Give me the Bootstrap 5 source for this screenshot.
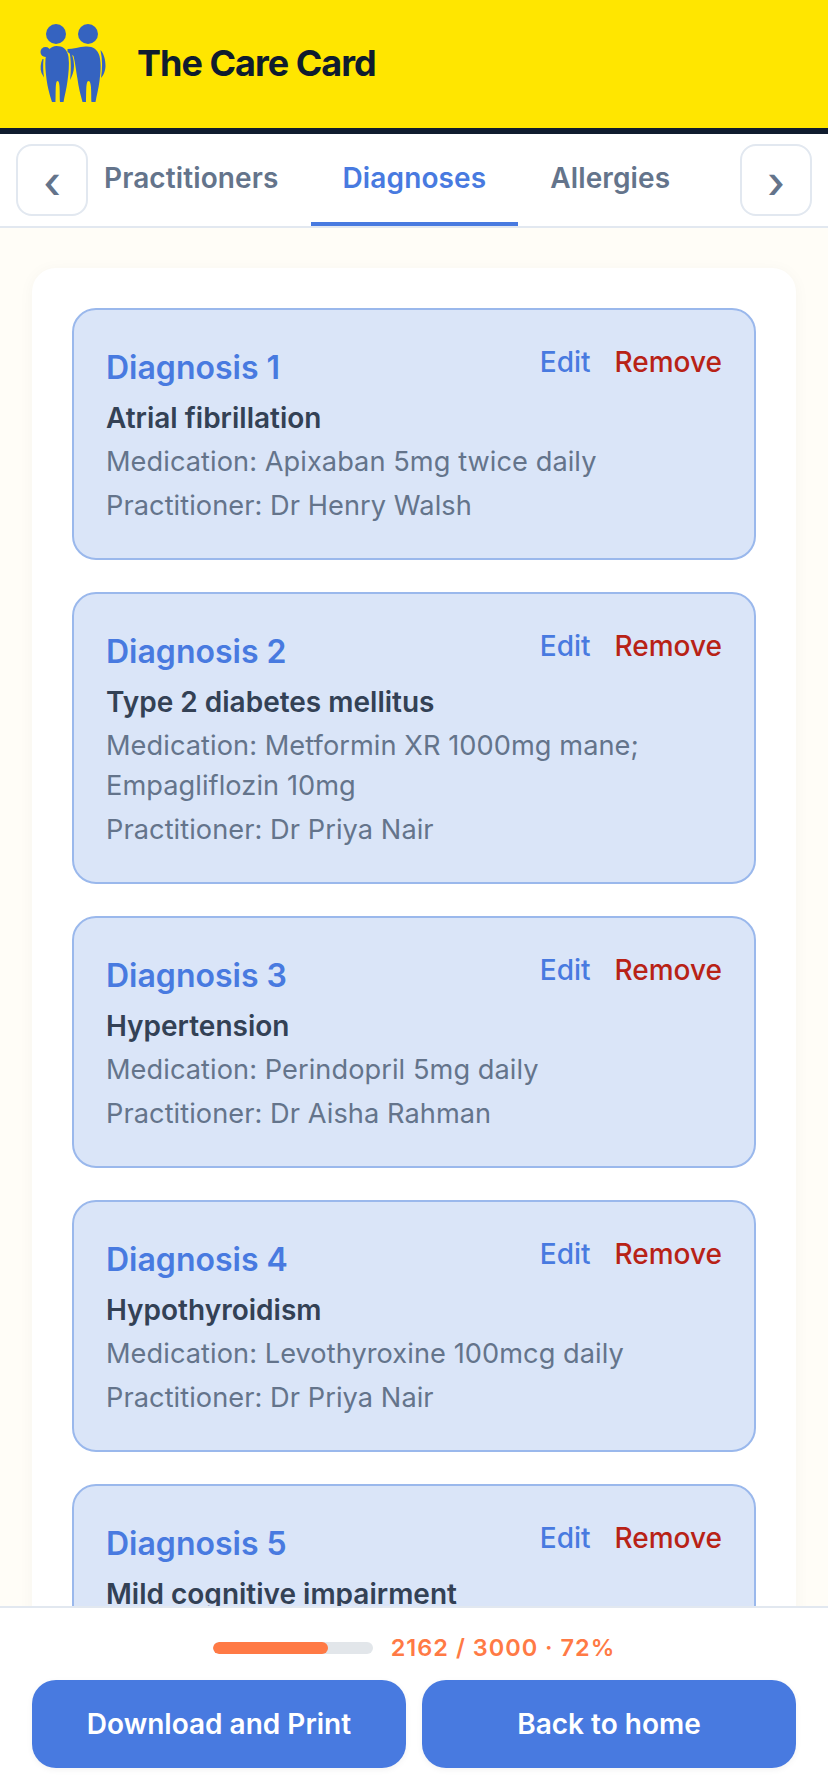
<!DOCTYPE html>
<html lang="en">
<head>
<meta charset="utf-8">
<title>The Care Card</title>
<link href="https://cdn.jsdelivr.net/npm/bootstrap@5.3.0/dist/css/bootstrap.min.css" rel="stylesheet">
<style>
html,body{height:100%;}
body{font-family:"Inter","Liberation Sans",sans-serif;background:#fffdf7;color:#334155;}
.shell{height:1792px;overflow:hidden;}
.brandbar{height:134px;background:#ffe600;border-bottom:6px solid #0f1c2e;padding-left:40px;padding-bottom:2px;gap:31px;}
.brandname{font-size:36px;font-weight:700;letter-spacing:-1px;color:#0f1c2e;}
.tabbar{height:94px;background:#fff;border-bottom:2px solid #e2e8f0;padding:10px 16px 0;}
.arrowbtn{width:72px;height:72px;flex:none;background:#fff;border:2px solid #e2e8f0;border-radius:16px;color:#64748b;font-size:44px;font-weight:500;line-height:72px;padding:0;}
.tabstrip{flex:1 1 0;min-width:0;overflow:hidden;height:82px;}
.tablink{height:82px;padding:0 32px;font-size:28px;font-weight:600;letter-spacing:.12px;color:#64748b;line-height:68px;white-space:nowrap;}
.tablink.first{padding-left:16px;}
.tablink.on{color:#487ae0;border-bottom:4px solid #487ae0;}
.mainscroll{flex:1 1 0;min-height:0;overflow:hidden;padding:40px 32px 0;}
.sheet{background:#fff;border-radius:24px;padding:40px;box-shadow:0 2px 16px rgba(60,60,0,.04);}
.dx{background:#dae5f8;border:2px solid #9ab8ec;border-radius:24px;padding:32px;margin-bottom:32px;min-height:251px;}
.dxtitle{font-size:32px;font-weight:600;color:#487ae0;line-height:52px;}
.dxact{font-size:28px;font-weight:500;line-height:40px;gap:24px;}
.actedit{color:#487ae0;}
.actremove{color:#b82216;}
.dxname{font-size:28px;font-weight:600;color:#334155;line-height:40px;margin-top:4px;}
.dxmeta{font-size:27.2px;letter-spacing:.06px;color:#64748b;line-height:40px;margin-top:4px;}
.footbar{height:186px;background:#fff;border-top:2px solid #e2e8f0;padding:0 32px;}
.progline{height:72px;padding-top:8px;gap:18px;}
.track{width:160px;height:12px;background:#e2e6ea;border-radius:6px;overflow:hidden;}
.fill{height:100%;background:#ff7a45;border-radius:6px;}
.progtext{font-size:23.5px;font-weight:600;color:#ff7a45;letter-spacing:1px;}
.footbtn{height:88px;flex:1 1 0;background:#487ae0;border:0;border-radius:24px;color:#fff;font-size:28px;font-weight:600;box-shadow:0 2px 6px rgba(0,0,0,.05);}
</style>
</head>
<body>
<div class="shell d-flex flex-column">
  <header class="brandbar d-flex align-items-center">
    <svg width="66" height="80" viewBox="39.500 24 66 80" aria-hidden="true" fill="#3563c0">
      <circle cx="55.500" cy="35" r="10"/>
      <circle cx="87.500" cy="35" r="10"/>
      <circle cx="45" cy="53" r="5"/>
      <path d="M56 47C62 47 67 50 68 58C69 66 68 74 67 82C66 90 64 97 63 103L59.500 103C59 96 60 82 57 82C54.500 82 55.500 96 55 103L51.500 103C49.500 97 47 88 46 80C45 72 44.500 66 45 60C46 52 50 47 56 47Z"/>
      <path d="M67 50C72 50 79 48 85 47.500C92 47 97 50 99 57C101 66 100 74 99 82C98 90 96 97 95 103L91 103C90.500 96 91.500 82 88 82C85 82 86 96 85.500 103L82 103C80 96 78 88 77 80C75.500 72 75 65 73 57L67 53Z"/>
      <path d="M42 60C40 64 39.500 70 41 74L43.500 78.500C42.500 72 42.500 66 43 60Z"/>
      <path d="M68.500 51C71.500 54 73.500 60 73.500 67C73.500 73 71.500 77 69.500 81C70.500 74 71 60 68.500 51Z"/>
      <path d="M100 51C103.500 55 105 61 105 67C105 72 102.500 77 100.500 79C102 70 102 60 100 51Z"/>
    </svg>
    <div class="brandname">The Care Card</div>
  </header>
  <nav class="tabbar d-flex align-items-start">
    <button class="arrowbtn btn" type="button">‹</button>
    <div class="tabstrip d-flex">
      <div class="tablink first">Practitioners</div>
      <div class="tablink on">Diagnoses</div>
      <div class="tablink">Allergies</div>
    </div>
    <button class="arrowbtn btn" type="button">›</button>
  </nav>
  <main class="mainscroll">
    <div class="sheet">
      <section class="dx">
        <div class="d-flex justify-content-between align-items-start">
          <div class="dxtitle">Diagnosis 1</div>
          <div class="dxact d-flex"><span class="actedit">Edit</span><span class="actremove">Remove</span></div>
        </div>
        <div class="dxname">Atrial fibrillation</div>
        <div class="dxmeta">Medication: Apixaban 5mg twice daily</div>
        <div class="dxmeta">Practitioner: Dr Henry Walsh</div>
      </section>
      <section class="dx">
        <div class="d-flex justify-content-between align-items-start">
          <div class="dxtitle">Diagnosis 2</div>
          <div class="dxact d-flex"><span class="actedit">Edit</span><span class="actremove">Remove</span></div>
        </div>
        <div class="dxname">Type 2 diabetes mellitus</div>
        <div class="dxmeta">Medication: Metformin XR 1000mg mane; Empagliflozin 10mg</div>
        <div class="dxmeta">Practitioner: Dr Priya Nair</div>
      </section>
      <section class="dx">
        <div class="d-flex justify-content-between align-items-start">
          <div class="dxtitle">Diagnosis 3</div>
          <div class="dxact d-flex"><span class="actedit">Edit</span><span class="actremove">Remove</span></div>
        </div>
        <div class="dxname">Hypertension</div>
        <div class="dxmeta">Medication: Perindopril 5mg daily</div>
        <div class="dxmeta">Practitioner: Dr Aisha Rahman</div>
      </section>
      <section class="dx">
        <div class="d-flex justify-content-between align-items-start">
          <div class="dxtitle">Diagnosis 4</div>
          <div class="dxact d-flex"><span class="actedit">Edit</span><span class="actremove">Remove</span></div>
        </div>
        <div class="dxname">Hypothyroidism</div>
        <div class="dxmeta">Medication: Levothyroxine 100mcg daily</div>
        <div class="dxmeta">Practitioner: Dr Priya Nair</div>
      </section>
      <section class="dx">
        <div class="d-flex justify-content-between align-items-start">
          <div class="dxtitle">Diagnosis 5</div>
          <div class="dxact d-flex"><span class="actedit">Edit</span><span class="actremove">Remove</span></div>
        </div>
        <div class="dxname">Mild cognitive impairment</div>
      </section>
    </div>
  </main>
  <footer class="footbar">
    <div class="progline d-flex align-items-center justify-content-center">
      <div class="track"><div class="fill" style="width:72%"></div></div>
      <div class="progtext">2162 / 3000 · 72%</div>
    </div>
    <div class="d-flex gap-3">
      <button class="footbtn" type="button">Download and Print</button>
      <button class="footbtn" type="button">Back to home</button>
    </div>
  </footer>
</div>
<script src="https://cdn.jsdelivr.net/npm/bootstrap@5.3.0/dist/js/bootstrap.bundle.min.js"></script>
</body>
</html>
